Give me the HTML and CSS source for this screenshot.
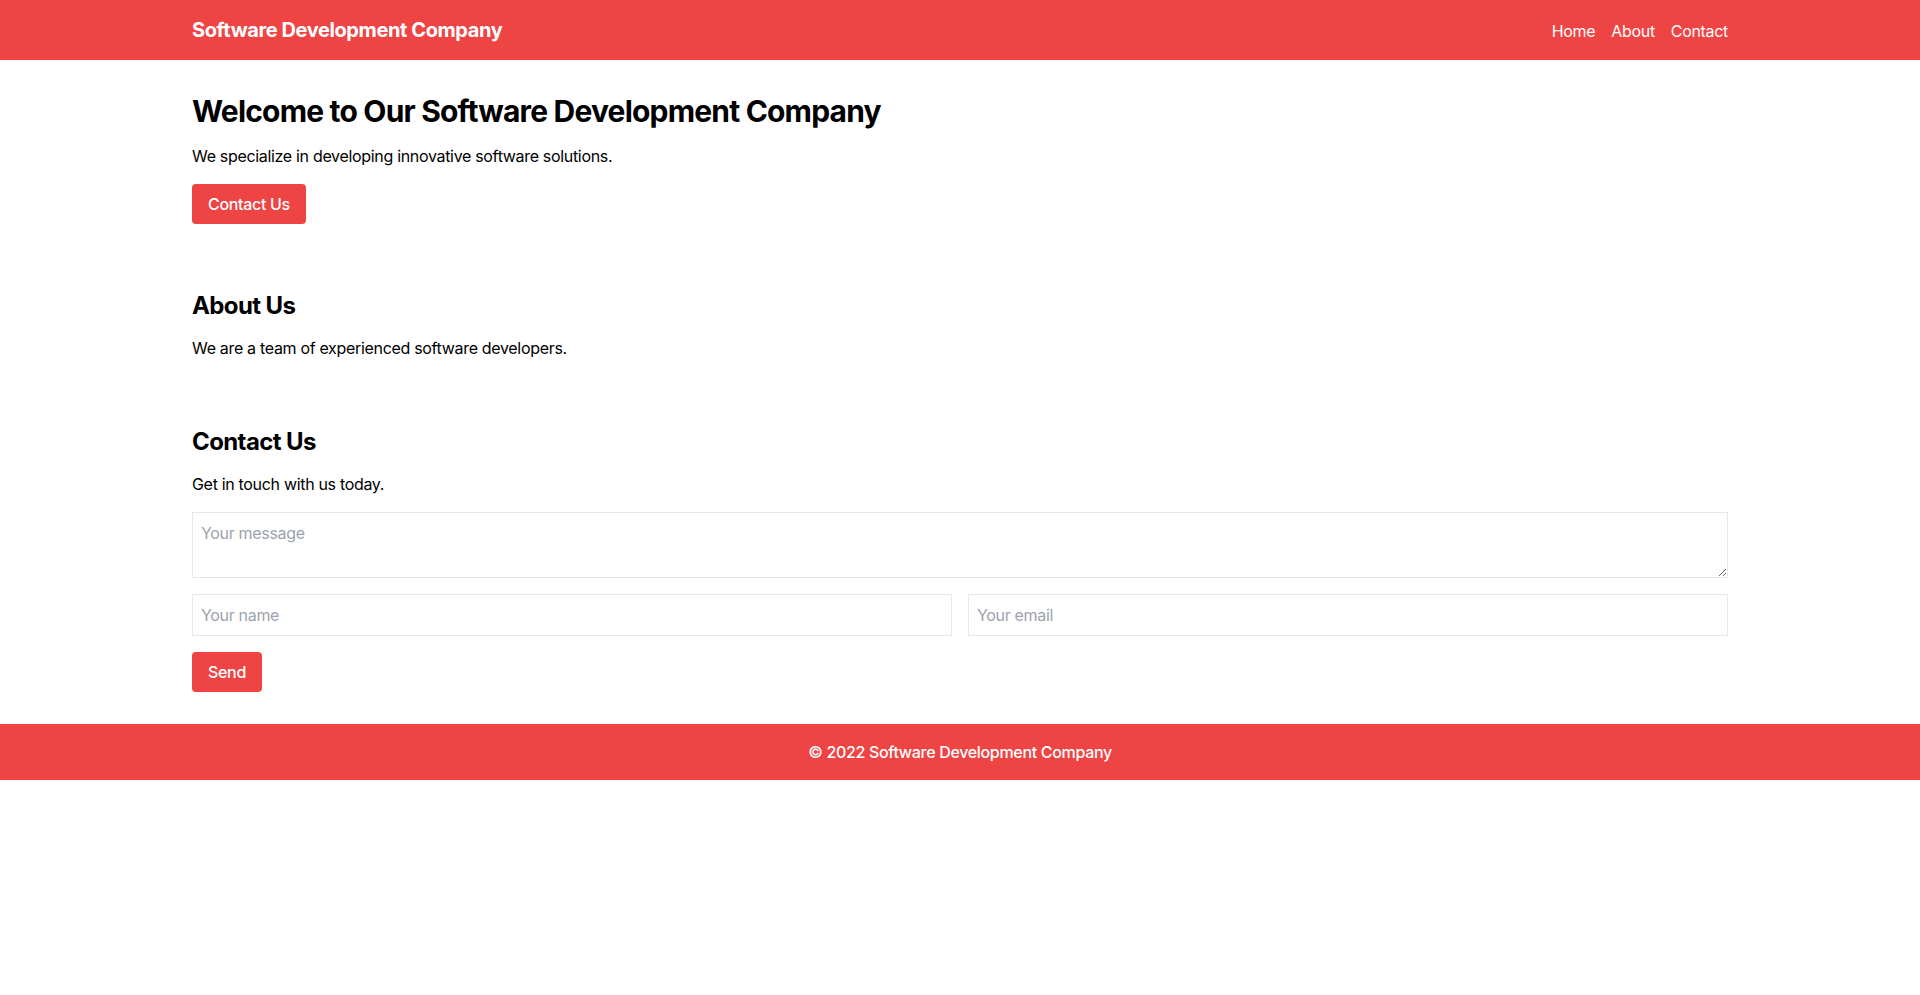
FILE: index.html
```html
<!DOCTYPE html>
<html lang="en">
<head>
<meta charset="utf-8">
<title>Software Development Company</title>
<link rel="stylesheet" href="styles.css">
</head>
<body>
<header class="site-header">
  <div class="container header-inner">
    <a class="brand" href="#">Software Development Company</a>
    <nav class="nav">
      <a href="#">Home</a>
      <a href="#about">About</a>
      <a href="#contact">Contact</a>
    </nav>
  </div>
</header>
<main>
  <section class="section container">
    <h1 class="title">Welcome to Our Software Development Company</h1>
    <p class="text">We specialize in developing innovative software solutions.</p>
    <a class="btn" href="#contact">Contact Us</a>
  </section>
  <section class="section container" id="about">
    <h2 class="subtitle">About Us</h2>
    <p class="text">We are a team of experienced software developers.</p>
  </section>
  <section class="section container" id="contact">
    <h2 class="subtitle">Contact Us</h2>
    <p class="text">Get in touch with us today.</p>
    <form class="form">
      <textarea class="field message" placeholder="Your message"></textarea>
      <div class="row">
        <input class="field" type="text" placeholder="Your name">
        <input class="field" type="email" placeholder="Your email">
      </div>
      <button class="btn" type="button">Send</button>
    </form>
  </section>
</main>
<footer class="site-footer">
  <p>© 2022 Software Development Company</p>
</footer>
</body>
</html>
```

FILE: styles.css
```css
*, *::before, *::after { box-sizing: border-box; }
html, body { margin: 0; padding: 0; }
body {
  font-family: Inter, "Liberation Sans", sans-serif;
  font-size: 16px;
  line-height: 24px;
  letter-spacing: -0.02em;
  color: #000;
  background: #fff;
}
a { color: inherit; text-decoration: none; }
h1, h2, p { margin: 0; }

.container {
  width: 100%;
  max-width: 1536px;
  margin: 0 auto;
}

.site-header {
  background: #ef4444;
  color: #fff;
  padding: 16px 0;
}
.header-inner {
  display: flex;
  align-items: center;
  justify-content: space-between;
}
.brand {
  font-size: 20px;
  line-height: 28px;
  font-weight: 700;
  letter-spacing: -0.02em;
}
.nav {
  display: flex;
  gap: 16px;
  padding-top: 1px;
}

.section {
  padding: 32px 0;
}
.title {
  font-size: 30px;
  line-height: 36px;
  font-weight: 700;
  letter-spacing: -0.027em;
  padding-top: 1px;
  margin-bottom: 15px;
}
.subtitle {
  font-size: 24px;
  line-height: 32px;
  font-weight: 700;
  letter-spacing: -0.025em;
  padding-top: 2px;
  margin-bottom: 14px;
}
.section .text + .btn,
.section .text + .form { margin-top: 16px; }

.btn {
  display: inline-block;
  background: #ef4444;
  color: #fff;
  border: none;
  border-radius: 4px;
  padding: 8px 16px;
  font-family: inherit;
  font-size: 16px;
  line-height: 24px;
  font-weight: 500;
  letter-spacing: -0.02em;
  cursor: pointer;
}

.form {
  display: flex;
  flex-direction: column;
  align-items: flex-start;
  gap: 16px;
}
.field {
  display: block;
  width: 100%;
  border: 1px solid #e5e7eb;
  border-radius: 0;
  padding: 8px;
  font-family: inherit;
  font-size: 16px;
  line-height: 24px;
  letter-spacing: -0.02em;
  color: #000;
  background: #fff;
  margin: 0;
}
.field::placeholder { color: #9ca3af; }
.message {
  height: 66px;
  resize: vertical;
}
.row {
  display: flex;
  gap: 16px;
  width: 100%;
}
.row .field { flex: 1; min-width: 0; }

.site-footer {
  background: #ef4444;
  color: #fff;
  text-align: center;
  padding: 16px 0;
  font-weight: 500;
}
```
